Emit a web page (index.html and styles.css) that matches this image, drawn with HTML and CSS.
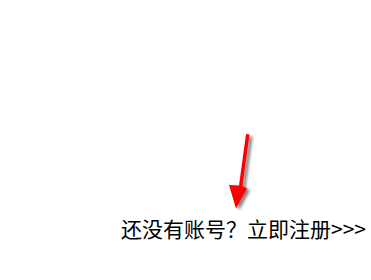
FILE: index.html
```html
<!DOCTYPE html>
<html lang="zh">
<head>
<meta charset="utf-8">
<link rel="stylesheet" href="styles.css">
</head>
<body>
<div class="page">
  <div class="register">还没有账号？立即注册&gt;&gt;&gt;</div>
</div>
<svg class="arrow" width="40" height="90" viewBox="0 0 40 90">
  <defs>
    <filter id="sh" x="-50%" y="-20%" width="200%" height="150%">
      <feGaussianBlur in="SourceAlpha" stdDeviation="1.6"/>
      <feOffset dx="3" dy="2" result="b"/>
      <feComponentTransfer><feFuncA type="linear" slope="0.5"/></feComponentTransfer>
      <feMerge><feMergeNode/><feMergeNode in="SourceGraphic"/></feMerge>
    </filter>
  </defs>
  <polygon filter="url(#sh)" fill="#ff0000" points="25,4 28.5,4.5 21.5,56 26,58.5 15,78.5 8,55 18,55.5"/>
</svg>
</body>
</html>
```
FILE: styles.css
```css
html, body {
  margin: 0;
  padding: 0;
  background: #ffffff;
}
.page {
  width: 371px;
  height: 280px;
  display: flex;
  flex-direction: column;
  justify-content: flex-end;
  align-items: flex-end;
  padding: 0 5px 38px 0;
  box-sizing: border-box;
}
.register {
  font-family: "Noto Sans CJK SC", "Noto Sans", sans-serif;
  font-size: 21px;
  line-height: 28px;
  color: #000000;
  white-space: nowrap;
}
.arrow {
  position: absolute;
  left: 221px;
  top: 130px;
}
```
